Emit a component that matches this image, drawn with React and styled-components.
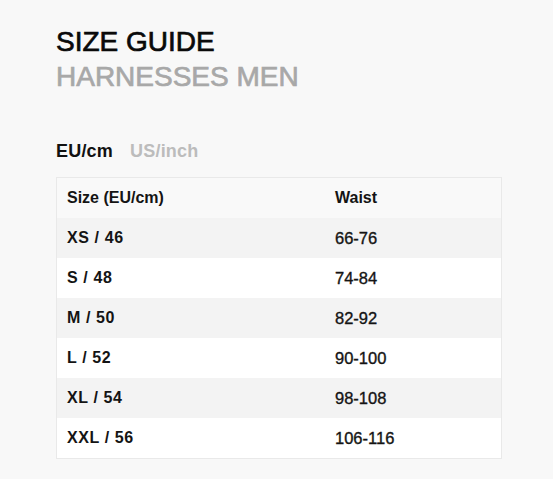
import React, { useState } from 'react';
import styled, { createGlobalStyle } from 'styled-components';

const GlobalStyle = createGlobalStyle`
  html, body {
    margin: 0;
    padding: 0;
    background: #f8f8f8;
  }
  body {
    font-family: "Liberation Sans", Arial, sans-serif;
    color: #111;
  }
`;

const Page = styled.div`
  padding: 24px 51px 20px 56px;
`;

const Title = styled.h1`
  margin: 0;
  font-size: 28px;
  line-height: 35px;
  font-weight: 400;
  -webkit-text-stroke: 0.7px currentColor;
  color: ${props => (props.muted ? '#a8a8a8' : '#0a0a0a')};
`;

const Tabs = styled.div`
  display: flex;
  gap: 17px;
  margin-top: 47px;
  margin-bottom: 16px;
`;

const Tab = styled.button`
  background: none;
  border: 0;
  padding: 0;
  font-family: inherit;
  font-size: 18px;
  line-height: 20px;
  font-weight: 700;
  letter-spacing: 0.2px;
  color: ${props => (props.active ? '#111' : '#bcbcbc')};
  cursor: pointer;
`;

const Table = styled.table`
  width: 446px;
  border-collapse: collapse;
  border: 1px solid #e9e9e9;
`;

const Row = styled.tr`
  background: ${props => props.bg};
`;

const Cell = styled.td`
  height: 40px;
  padding: 0 10px;
  font-size: ${props => (props.strong ? '16px' : '16.5px')};
  font-weight: ${props => (props.strong ? 700 : 400)};
  letter-spacing: ${props => (props.strong && !props.head ? '0.6px' : '0')};
  -webkit-text-stroke: ${props => (props.strong ? '0' : '0.35px currentColor')};
  color: #141414;
  text-align: left;
  vertical-align: middle;
  width: ${props => props.w || 'auto'};
`;

const data = [
  ['XS / 46', '66-76'],
  ['S / 48', '74-84'],
  ['M / 50', '82-92'],
  ['L / 52', '90-100'],
  ['XL / 54', '98-108'],
  ['XXL / 56', '106-116'],
];

export default function App() {
  const [unit, setUnit] = useState('eu');
  return (
    <Page>
      <GlobalStyle />
      <Title>SIZE GUIDE</Title>
      <Title muted>HARNESSES MEN</Title>
      <Tabs>
        <Tab active={unit === 'eu'} onClick={() => setUnit('eu')}>EU/cm</Tab>
        <Tab active={unit === 'us'} onClick={() => setUnit('us')}>US/inch</Tab>
      </Tabs>
      <Table>
        <tbody>
          <Row bg="#f9f9f9">
            <Cell w="248px" strong head>Size (EU/cm)</Cell>
            <Cell strong head>Waist</Cell>
          </Row>
          {data.map(([size, waist], i) => (
            <Row key={size} bg={i % 2 === 0 ? '#f3f3f3' : '#ffffff'}>
              <Cell strong>{size}</Cell>
              <Cell>{waist}</Cell>
            </Row>
          ))}
        </tbody>
      </Table>
    </Page>
  );
}
